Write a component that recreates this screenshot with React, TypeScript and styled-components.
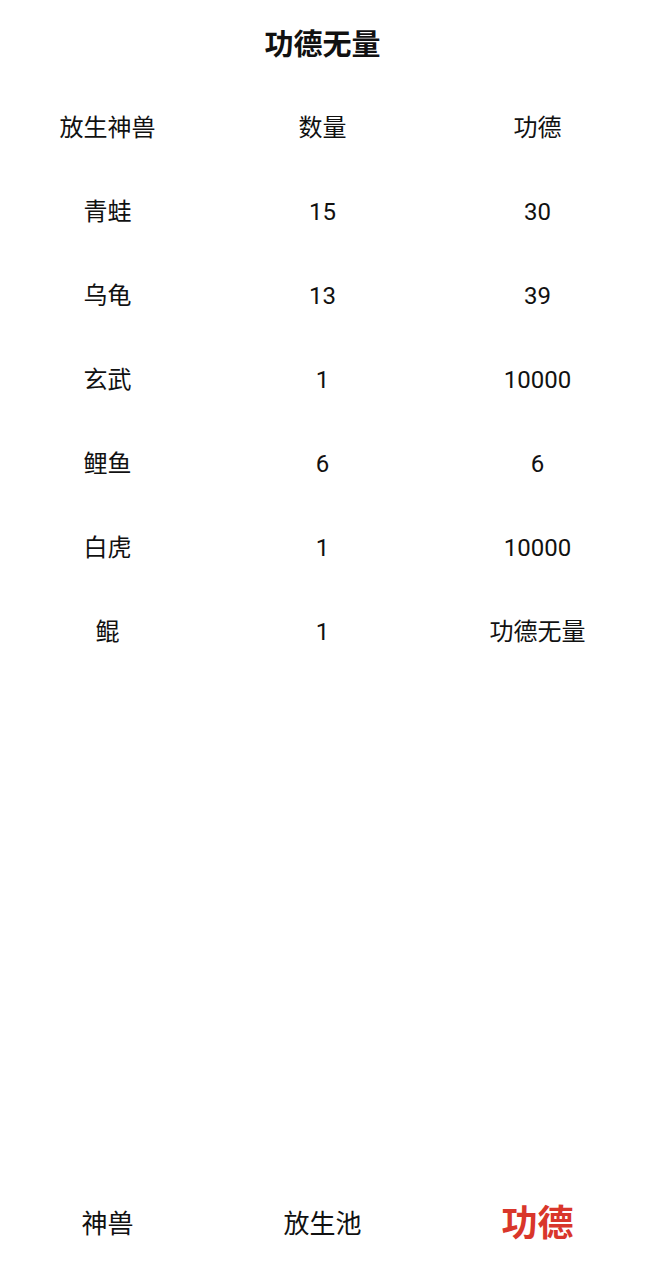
import React from "react";
import styled, { createGlobalStyle } from "styled-components";

const GlobalStyle = createGlobalStyle`
	html, body {
		margin: 0;
		padding: 0;
		background: #ffffff;
	}
	body {
		font-family: Roboto, "Noto Sans CJK SC", "Noto Sans", sans-serif;
		color: #111111;
	}
`;

const rows = [
	{ name: "青蛙", count: "15", merit: "30" },
	{ name: "乌龟", count: "13", merit: "39" },
	{ name: "玄武", count: "1", merit: "10000" },
	{ name: "鲤鱼", count: "6", merit: "6" },
	{ name: "白虎", count: "1", merit: "10000" },
	{ name: "鲲", count: "1", merit: "功德无量" },
];

const tabs = ["神兽", "放生池", "功德"];

const App = () => {
	return (
		<Page>
			<GlobalStyle />
			<Title>功德无量</Title>

			<Table>
				<Row>
					<Cell>放生神兽</Cell>
					<Cell>数量</Cell>
					<Cell>功德</Cell>
				</Row>
				{rows.map((r) => (
					<Row key={r.name}>
						<Cell>{r.name}</Cell>
						<Cell>{r.count}</Cell>
						<Cell>{r.merit}</Cell>
					</Row>
				))}
			</Table>

			<TabBar>
				{tabs.map((t, i) => (
					<Tab key={t} $active={i === tabs.length - 1}>
						{t}
					</Tab>
				))}
			</TabBar>
		</Page>
	);
};

const Page = styled.div`
	min-height: 100vh;
	display: flex;
	flex-direction: column;
	box-sizing: border-box;
`;

const Title = styled.h1`
	margin: 0;
	height: 86px;
	display: flex;
	align-items: center;
	justify-content: center;
	font-size: 29px;
	font-weight: 700;
	padding-bottom: 2px;
	box-sizing: border-box;
`;

const Table = styled.div`
	display: flex;
	flex-direction: column;
	flex: 1;
`;

const Row = styled.div`
	display: grid;
	grid-template-columns: repeat(3, 1fr);
	height: 84px;
	align-items: center;
`;

const Cell = styled.div`
	text-align: center;
	font-size: 24px;
	line-height: 1;
`;

const TabBar = styled.nav`
	display: grid;
	grid-template-columns: repeat(3, 1fr);
	height: 112px;
	align-items: center;
`;

const Tab = styled.div<{ $active?: boolean }>`
	text-align: center;
	font-size: ${(p) => (p.$active ? "36px" : "26px")};
	font-weight: ${(p) => (p.$active ? 700 : 400)};
	color: ${(p) => (p.$active ? "#d9362b" : "#111111")};
	line-height: 1;
`;

export default App;
